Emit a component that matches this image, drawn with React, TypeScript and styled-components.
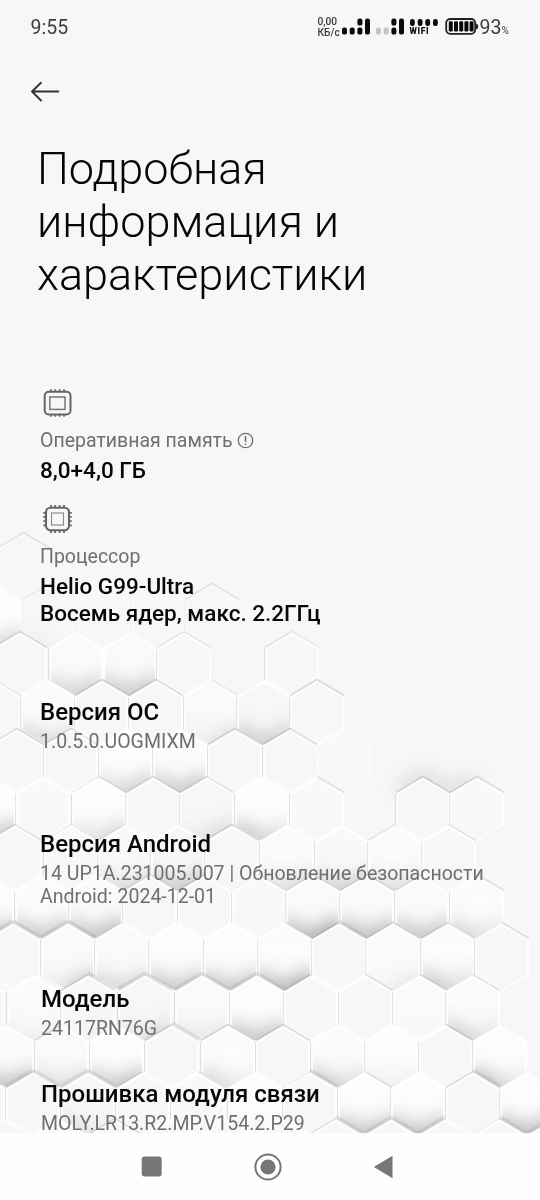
import React from "react";
import styled, { createGlobalStyle } from "styled-components";

const GlobalStyle = createGlobalStyle`
  * { box-sizing: border-box; }
  body { margin: 0; background: #f7f7f7; font-family: Roboto, "Noto Sans", sans-serif; }
`;

const Screen = styled.main`
  position: relative;
  display: flex;
  flex-direction: column;
  width: 540px;
  height: 1200px;
  overflow: hidden;
  background: #f7f7f7;
`;

const Backdrop = styled.svg`
  position: absolute;
  inset: 0;
`;

const StatusBar = styled.header`
  display: flex;
  align-items: center;
  justify-content: space-between;
  height: 54px;
  padding: 0 29.5px 0 30.5px;
  color: #3c3c3c;
`;

const Clock = styled.span`
  font-size: 19.5px;
`;

const StatusIcons = styled.div`
  display: flex;
  align-items: center;
  height: 22px;
`;

const Speed = styled.div`
  display: flex;
  flex-direction: column;
  width: 24.5px;
  font-size: 10.2px;
  line-height: 11px;
  font-weight: 500;
  white-space: nowrap;
`;

const Wifi = styled.div`
  display: flex;
  flex-direction: column;
  width: 28px;
  margin-left: 4.5px;
  color: #111;
  font-size: 8.5px;
  line-height: 9px;
  font-weight: 900;
  letter-spacing: 0.6px;
`;

const Percent = styled.span`
  width: 31px;
  margin-left: 1px;
  font-size: 19.5px;
  white-space: nowrap;
  small { font-size: 10px; }
`;

const BackButton = styled.button`
  display: flex;
  width: 32px;
  height: 24px;
  margin: 25px 0 0 29px;
  padding: 0;
  border: 0;
  background: none;
`;

const Title = styled.h1`
  margin: 39px 0 0 37px;
  width: 400px;
  font-size: 45px;
  line-height: 53px;
  font-weight: 300;
  color: #060606;
`;

const Content = styled.div`
  position: relative;
  display: flex;
  flex-direction: column;
  flex: 1;
`;

const Spec = styled.section<{ $top: number; $left?: number }>`
  display: flex;
  flex-direction: column;
  align-items: flex-start;
  margin: ${(p) => p.$top}px 0 0 ${(p) => p.$left ?? 40}px;
`;

const SpecLabel = styled.div`
  display: flex;
  align-items: center;
  gap: 4px;
  height: 23px;
  margin-top: 11px;
  font-size: 19.5px;
  line-height: 23px;
  color: #6f6f6f;
`;

const Strong = styled.div`
  margin-top: 5px;
  font-size: 22.5px;
  line-height: 27px;
  font-weight: 500;
  color: #070707;
  white-space: nowrap;
`;

const Heading = styled(Strong)`
  margin-top: 0;
  font-size: 24px;
`;

const Detail = styled.div`
  margin-top: 4px;
  font-size: 19.55px;
  line-height: 23px;
  color: #6f6f6f;
  white-space: nowrap;
`;

const NavBar = styled.nav`
  position: absolute;
  left: 0;
  right: 0;
  bottom: 0;
  display: flex;
  align-items: center;
  justify-content: space-between;
  height: 67px;
  padding: 0 147px 0 141px;
  background: rgba(254, 254, 254, 0.9);
`;

// x, shade along the lower-left and lower-right sides, strength of the upper-left and upper-right edges, highlight.
type Cell = [x: number, lowL?: number, lowR?: number, topL?: number, topR?: number, lit?: number];

const rows: { y: number; cells: Cell[] }[] = [
  { y: 532, cells: [[23.5, 0, 0, 3, 3.5]] },
  { y: 583, cells: [[-5, 3, 4, 0, 0, 1], [50, 1, 0, 2, 0], [104], [158], [212, 0, 0, 3, 3]] },
  { y: 631, cells: [[20, 0, 0, 4, 5], [76, 4, 5, 0, 0, 0.6], [130, 5, 6, 0, 0, 0.5], [184, 0, 0, 3, 3], [292, 0, 0, 3, 2]] },
  { y: 679, cells: [[-6, 0, 0, 0, 3], [48, 4, 3, 0, 0, 0.7], [102, 0, 0, 5, 5], [156, 0, 0, 5, 5], [211, 1, 3, 0, 2, 0.5], [264, 5, 5], [317, 0, 0, 5, 5]] },
  { y: 728, cells: [[17, 0, 0, 4, 5], [71, 0, 0, 4, 3], [126, 3, 5, 0, 0, 1], [180, 5, 6, 0, 0, 0.8], [235, 0, 0, 5, 5], [290, 0, 0, 5, 5], [343, 0, 0, 0, 0, 0.3]] },
  { y: 776, cells: [[-11, 5, 6, 0, 0, 1], [43, 0, 0, 0, 0, 0.4], [99, 2, 4, 2, 3, 1], [153, 0, 0, 4, 4], [207, 1, 4, 4, 4], [262, 6, 3, 0, 0, 1], [317, 0, 0, 0, 4, 0.4], [423, 0, 0, 5, 5], [477, 0, 0, 5, 4, 0.4]] },
  { y: 824, cells: [[15, 0, 0, 4, 4], [71, 0, 0, 2, 1, 0.3], [125, 3, 4, 2, 0, 0.3], [178, 5, 6], [232, 0, 0, 5, 5], [287, 2, 4, 0, 0, 0.7], [342, 4, 5, 0, 0, 0.4], [395, 3, 3, 3, 0, 0.7], [449, 0, 0, 0, 4]] },
  { y: 874, cells: [[-13, 5, 6, 0, 0, 1], [42, 6, 6, 0, 0, 0.8], [96, 6, 8, 0, 0, 0.5], [150, 0, 0, 4, 3], [205, 0, 0, 4, 1], [259, 0, 0, 2, 3, 0.3], [313, 7, 10, 3, 4, 0.5], [367, 7, 7, 4, 4, 0.5], [422, 6, 6, 3, 1, 0.6], [477, 4, 2, 0, 4, 0.8]] },
  { y: 922, cells: [[13, 0, 0, 6, 7], [68, 1, 6, 6, 7, 0.5], [122, 4, 4, 0, 0, 0.5], [176, 6, 6, 0, 0, 0.9], [231, 6, 6, 0, 0, 0.9], [285, 7, 9, 0, 2, 0.8], [339, 0, 0, 5, 6], [393, 0, 2, 5, 5, 0.7], [448, 6, 3, 4, 4, 0.8], [502, 0, 0, 0, 4]] },
  { y: 974, cells: [[-22], [34, 1, 1, 0, 0, 0.7], [88, 0, 1, 5, 6], [145, 2, 4, 6, 6], [202, 2, 2, 6, 6, 0.6], [257, 6, 6, 6, 6, 1], [311, 0, 0, 5, 0], [366, 0, 0, 0, 4], [420, 0, 0, 0, 4, 0.5], [473, 5, 2, 0, 4, 0.6]] },
  { y: 1024, cells: [[7, 6, 7, 0, 0, 0.8], [62, 3, 3, 4, 0, 0.5], [117, 5, 7, 0, 0, 1], [172, 0, 0, 5, 6], [228, 4, 1, 5, 5, 0.8], [283, 0, 0, 5, 5], [338, 6, 3, 0, 0, 0.8], [392, 1, 1, 0, 0, 1], [446, 0, 0, 0, 5], [500, 7, 2, 0, 0, 1]] },
  { y: 1071, cells: [[-22, 2, 0], [33, 0, 0, 6, 6], [88, 3, 1, 6, 6], [143, 0, 0, 3, 0], [198, 0, 0, 0, 4, 0.3], [255, 0, 0, 0, 0, 1], [310, 0, 0, 2, 6], [365, 6, 6, 0, 4, 1], [418, 6, 6, 0, 0, 1], [473, 0, 0, 5, 6], [527, 7, 7, 0, 0, 1]] },
  { y: 1118, cells: [[5], [60, 3, 3, 0, 0, 0.5], [115, 2, 2, 5, 5], [171], [226], [281], [336, 1, 1, 4, 6], [391, 1, 1, 6, 6], [445, 0, 0, 6, 0], [500, 1, 1, 2, 6], [554, 0, 0, 6, 0]] },
  { y: 1166, cells: [[33, 0, 0, 4, 0], [143, 0, 0, 4, 4], [198, 0, 0, 0, 4], [310, 0, 0, 3, 3], [418, 0, 0, 3, 3], [473, 0, 0, 4, 4]] },
];

const Edge = ({ x1, y1, x2, y2, v }: { x1: number; y1: number; x2: number; y2: number; v: number }) => {
  if (!v) return null;
  const thick = v >= 6;
  const lift = thick ? 1.8 : 0.5;
  return (
    <line
      x1={x1} y1={y1 - lift} x2={x2} y2={y2 - lift}
      stroke={thick ? "#999" : "#707070"}
      strokeWidth={thick ? 4 : 1.6}
      opacity={thick ? v * 0.038 : v * 0.046}
    />
  );
};

const Honeycomb = () => (
  <Backdrop width="540" height="1200" viewBox="0 0 540 1200" aria-hidden>
    <defs>
      <linearGradient id="lit" x1="0" y1="0" x2="0" y2="1">
        <stop offset="0" stopColor="#fff" stopOpacity="0.6" />
        <stop offset="0.45" stopColor="#fff" stopOpacity="0.75" />
        <stop offset="1" stopColor="#fff" stopOpacity="0.1" />
      </linearGradient>
      <filter id="soft" filterUnits="userSpaceOnUse" x="-60" y="500" width="660" height="720">
        <feGaussianBlur stdDeviation="0.7" />
      </filter>
      <filter id="shade" filterUnits="userSpaceOnUse" x="-60" y="500" width="660" height="760">
        <feGaussianBlur stdDeviation="9" />
      </filter>
    </defs>
    <g transform="translate(0 1)">
      <g filter="url(#shade)" fill="none" stroke="#999" strokeWidth="9" opacity="0.42">
        <path d="M398 789L423 775L450 790L476 777" />
      </g>
      {rows.map((row, i) => {
        const next = rows[i + 1]?.y ?? row.y + 48;
        return row.cells.map(([x, lowL = 0, lowR = 0, , , lit = 0]) => {
          const top = row.y;
          const points = `${x},${top} ${x + 27.2},${top + 16} ${x + 27.2},${next} ${x},${next + 16} ${x - 27.2},${next} ${x - 27.2},${top + 16}`;
          const id = `cell${i}-${Math.round(x + 60)}`;
          return (
            <g key={id}>
              <clipPath id={id}><polygon points={points} /></clipPath>
              <polygon points={points} fill="#f7f7f7" />
              {lit > 0 && <polygon points={points} fill="url(#lit)" opacity={lit} />}
              {lowL + lowR > 0 && (
                <g clipPath={`url(#${id})`}>
                  <g filter="url(#shade)" stroke="#777" strokeWidth="19" fill="none">
                    <path d={`M${x - 30} ${next + 2}L${x} ${next + 20}`} opacity={lowL * 0.066} />
                    <path d={`M${x} ${next + 20}L${x + 30} ${next + 2}`} opacity={lowR * 0.066} />
                  </g>
                </g>
              )}
            </g>
          );
        });
      })}
      <g filter="url(#soft)">
        {rows.map((row, i) => {
          const next = rows[i + 1]?.y ?? row.y + 48;
          return row.cells.map(([x, lowL = 0, lowR = 0, topL = 0, topR = 0]) => {
            const top = row.y;
            const faint = i < 2 || (x > 330 && i < 5) ? 0.35 : 1;
            return (
              <g key={`${i}-${x}`} fill="none">
                <path d={`M${x - 26} ${next}V${top + 17}L${x} ${top + 1.5}L${x + 26} ${top + 17}V${next}`} stroke="#fff" strokeWidth="2.2" opacity={0.8 * faint} />
                {lowL + lowR === 0 && (
                  <path d={`M${x - 26} ${next}L${x} ${next + 15}L${x + 26} ${next}`} stroke="#fff" strokeWidth="2" opacity={0.7 * faint} />
                )}
                {!(i === 2 && x === 130) && (
                  <path d={`M${x - 27.4} ${top + 17}V${next}`} stroke="#888" strokeWidth="1.1" opacity={0.24 * faint} />
                )}
                <Edge x1={x - 27} y1={top + 16} x2={x} y2={top} v={topL} />
                <Edge x1={x} y1={top} x2={x + 27} y2={top + 16} v={topR} />
              </g>
            );
          });
        })}
      </g>
    </g>
  </Backdrop>
);

const Signal = ({ dim }: { dim?: boolean }) => (
  <svg width="29" height="18" viewBox="0 0 29 18" fill="#0b0b0b">
    <rect x="0" y="9.4" width="5" height="7.2" rx="2.2" fill={dim ? "#c4c4c4" : undefined} />
    <rect x="7.7" y="9.4" width="5" height="7.2" rx="2.2" fill={dim ? "#c4c4c4" : undefined} />
    <rect x="15.4" y=".4" width="5" height="7.2" rx="2.2" />
    <rect x="15.4" y="9.4" width="5" height="7.2" rx="2.2" />
    <rect x="23" y=".4" width="5" height="16.2" rx="2.2" />
  </svg>
);

const Battery = () => (
  <svg width="34" height="18" viewBox="0 0 34 18">
    <rect x="1.2" y="1" width="29" height="14.8" rx="4" fill="none" stroke="#222" strokeWidth="1.8" />
    <path d="M31 5.6q2.3.4 2.3 2.8T31 11.2z" fill="#222" />
    {[3.8, 9, 14.2, 19.4, 24.6].map((x) => (
      <rect key={x} x={x} y="3.2" width="4" height="10.4" rx="1.3" fill="#080808" />
    ))}
  </svg>
);

const Chip = ({ sides }: { sides?: boolean }) => (
  <svg width="34" height="30" viewBox="0 0 34 30" fill="none" stroke="#666">
    {sides ? (
      <>
        <rect x="6" y="3.7" width="23" height="22.6" rx="4.5" strokeWidth="2.1" />
        <rect x="11.5" y="9" width="12" height="12" strokeWidth="1.1" stroke="#888" />
        <path d="M11 .9V4M15.2.9V4M19.6.9V4M24 .9V4M11 26v3M15.2 26v3M19.6 26v3M24 26v3M3.3 8.8h3M3.3 12.9h3M3.3 17.1h3M3.3 21.3h3M28.7 8.8h3M28.7 12.9h3M28.7 17.1h3M28.7 21.3h3" strokeWidth="1.8" />
      </>
    ) : (
      <>
        <rect x="4.7" y="3.7" width="25.8" height="22.8" rx="4" strokeWidth="2" />
        <rect x="9.8" y="9" width="15.2" height="12.4" strokeWidth="1.5" stroke="#777" />
        <path d="M11 1.2V4M15.3 1.2V4M19.6 1.2V4M24 1.2V4M11 26v2.8M15.3 26v2.8M19.6 26v2.8M24 26v2.8" strokeWidth="1.6" />
      </>
    )}
  </svg>
);

export default function App() {
  return (
    <Screen>
      <GlobalStyle />
      <Honeycomb />
      <Content>
        <StatusBar>
          <Clock>9:55</Clock>
          <StatusIcons>
            <Speed><span>0,00</span><span>КБ/с</span></Speed>
            <Signal />
            <svg width="5" height="1" />
            <Signal dim />
            <Wifi>
              <svg width="28" height="8" fill="#0b0b0b">
                {[0, 7.7, 15.3, 23].map((x) => <rect key={x} x={x} y="0" width="4.8" height="7" rx="2.2" />)}
              </svg>
              WIFI
            </Wifi>
            <svg width="7" height="1" />
            <Battery />
            <Percent>93<small>%</small></Percent>
          </StatusIcons>
        </StatusBar>
        <BackButton aria-label="Назад">
          <svg width="32" height="24" viewBox="0 0 32 24" fill="none" stroke="#333" strokeWidth="1.9" strokeLinecap="round" strokeLinejoin="round">
            <path d="M29.3 12.5H3M12 3.8L3 12.5L12 21.5" />
          </svg>
        </BackButton>
        <Title>Подробная информация и характеристики</Title>
        <Spec $top={87}>
          <Chip />
          <SpecLabel>
            Оперативная память
            <svg width="17" height="17" viewBox="0 0 17 17" fill="none" stroke="#707070" strokeWidth="1.3">
              <circle cx="8.5" cy="8.5" r="7.2" />
              <path d="M8.5 4V10M8.5 11.5V13" strokeWidth="1.5" />
            </svg>
          </SpecLabel>
          <Strong>8,0+4,0 ГБ</Strong>
        </Spec>
        <Spec $top={20}>
          <Chip sides />
          <SpecLabel>Процессор</SpecLabel>
          <Strong>Helio G99-Ultra<br />Восемь ядер, макс. 2.2ГГц</Strong>
        </Spec>
        <Spec $top={72}>
          <Heading>Версия ОС</Heading>
          <Detail>1.0.5.0.UOGMIXM</Detail>
        </Spec>
        <Spec $top={78}>
          <Heading>Версия Android</Heading>
          <Detail>14 UP1A.231005.007 | Обновление безопасности<br />Android: 2024-12-01</Detail>
        </Spec>
        <Spec $top={78} $left={41}>
          <Heading>Модель</Heading>
          <Detail>24117RN76G</Detail>
        </Spec>
        <Spec $top={41} $left={41}>
          <Heading>Прошивка модуля связи</Heading>
          <Detail>MOLY.LR13.R2.MP.V154.2.P29</Detail>
        </Spec>
      </Content>
      <NavBar>
        <svg width="21" height="21"><rect x=".7" y=".5" width="20" height="20" rx="3" fill="#777" /></svg>
        <svg width="28" height="28" viewBox="0 0 28 28" fill="none" stroke="#777">
          <circle cx="14" cy="14" r="12.6" strokeWidth="2" />
          <circle cx="14" cy="14" r="7.6" fill="#777" stroke="none" />
        </svg>
        <svg width="20" height="24"><path d="M.8 12L19.5.8V23.2z" fill="#777" /></svg>
      </NavBar>
    </Screen>
  );
}
